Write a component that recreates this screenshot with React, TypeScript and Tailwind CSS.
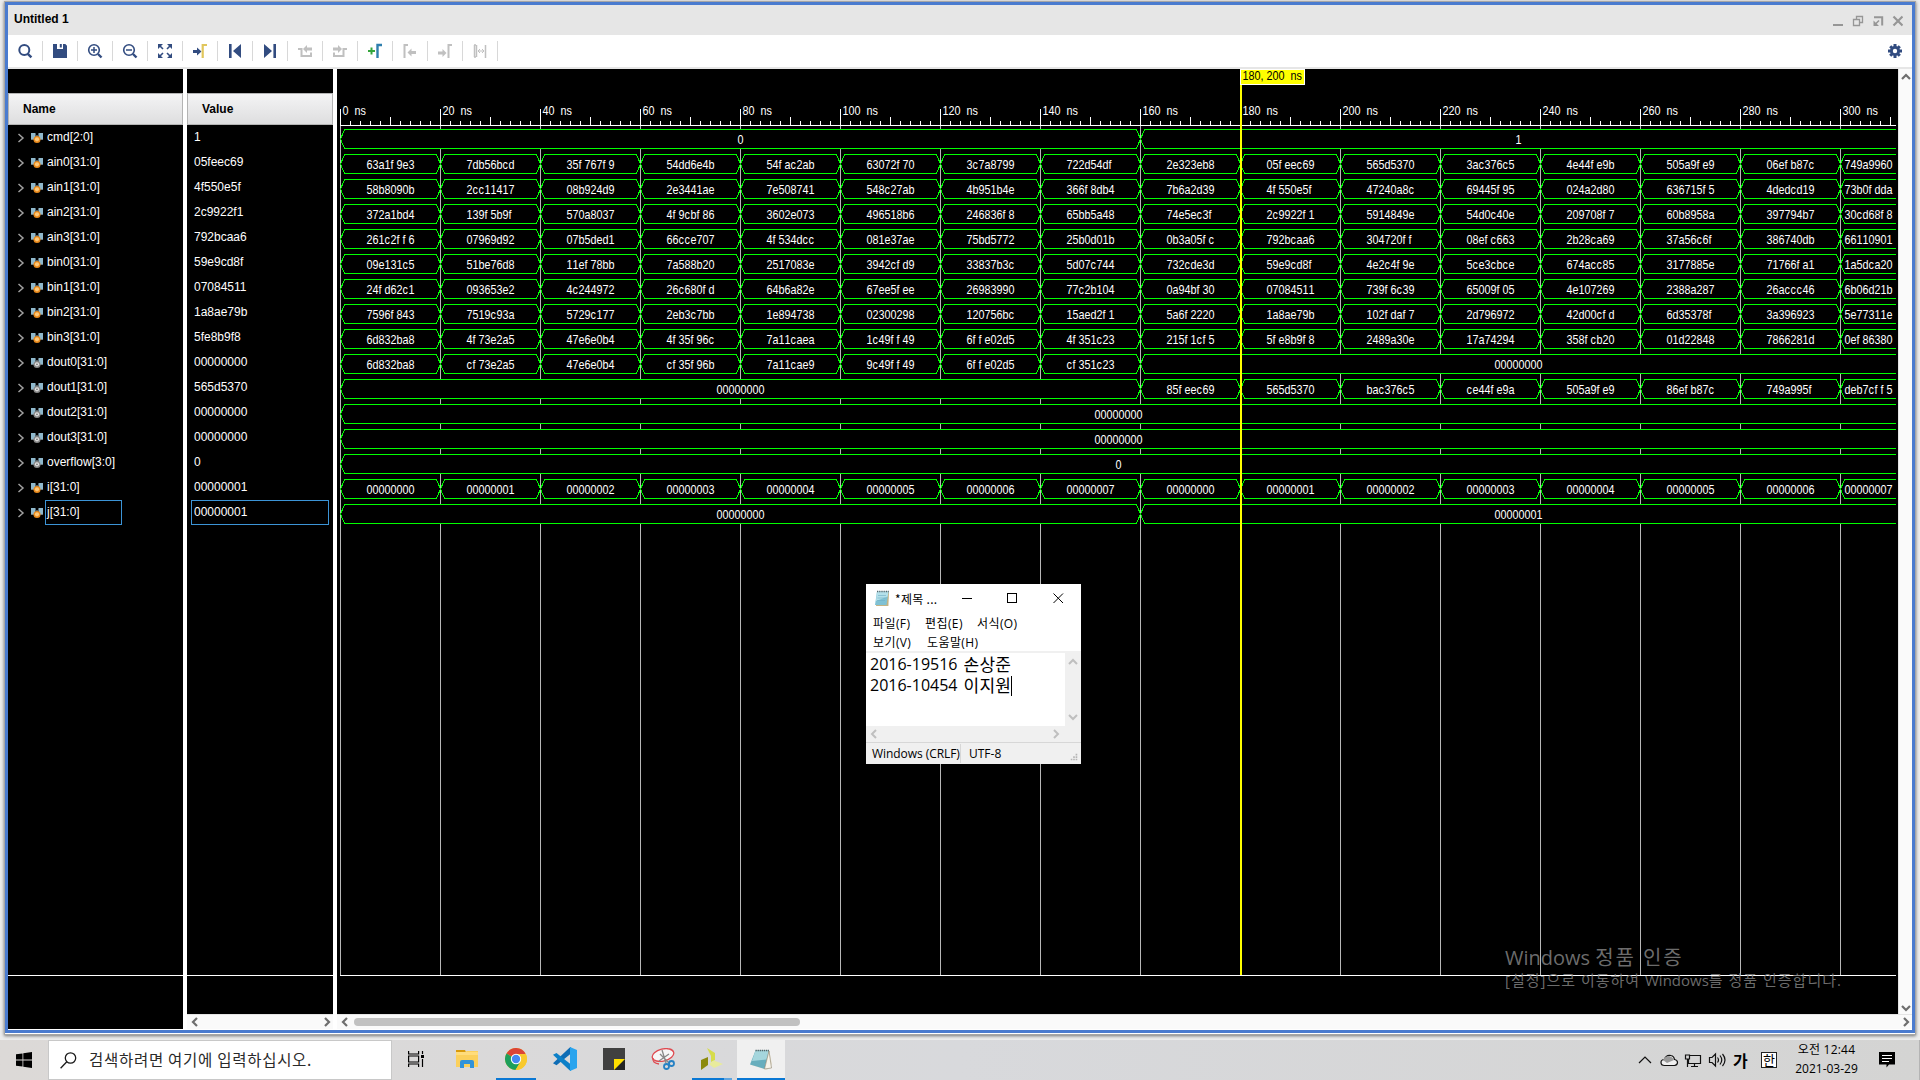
import React from "react";

const NAMES = [
  "cmd[2:0]", "ain0[31:0]", "ain1[31:0]", "ain2[31:0]", "ain3[31:0]", "bin0[31:0]", "bin1[31:0]", "bin2[31:0]",
  "bin3[31:0]", "dout0[31:0]", "dout1[31:0]", "dout2[31:0]", "dout3[31:0]", "overflow[3:0]", "i[31:0]", "j[31:0]",
];
const VALUES = [
  "1", "05feec69", "4f550e5f", "2c9922f1", "792bcaa6", "59e9cd8f", "07084511", "1a8ae79b",
  "5fe8b9f8", "00000000", "565d5370", "00000000", "00000000", "0", "00000001", "00000001",
];

type Segment = [start: number, end: number, label: string];

const END = 15.56;

const each = (s: string, from = 0): Segment[] =>
  s.split(" ").map((v, i) => [from + i, Math.min(from + i + 1, END), v]);

const WAVES: Segment[][] = [
  [[0, 8, "0"], [8, END, "1"]],
  each("63a1f9e3 7db56bcd 35f767f9 54dd6e4b 54fac2ab 63072f70 3c7a8799 722d54df 2e323eb8 05feec69 565d5370 3ac376c5 4e44fe9b 505a9fe9 06efb87c 749a9960"),
  each("58b8090b 2cc11417 08b924d9 2e3441ae 7e508741 548c27ab 4b951b4e 366f8db4 7b6a2d39 4f550e5f 47240a8c 69445f95 024a2d80 636715f5 4dedcd19 73b0fdda"),
  each("372a1bd4 139f5b9f 570a8037 4f9cbf86 3602e073 496518b6 246836f8 65bb5a48 74e5ec3f 2c9922f1 5914849e 54d0c40e 209708f7 60b8958a 397794b7 30cd68f8"),
  each("261c2ff6 07969d92 07b5ded1 66cce707 4f534dcc 081e37ae 75bd5772 25b0d01b 0b3a05fc 792bcaa6 304720ff 08efc663 2b28ca69 37a56c6f 386740db 66110901"),
  each("09e131c5 51be76d8 11ef78bb 7a588b20 2517083e 3942cfd9 33837b3c 5d07c744 732cde3d 59e9cd8f 4e2c4f9e 5ce3cbce 674acc85 3177885e 71766fa1 1a5dca20"),
  each("24fd62c1 093653e2 4c244972 26c680fd 64b6a82e 67ee5fee 26983990 77c2b104 0a94bf30 07084511 739f6c39 65009f05 4e107269 2388a287 26accc46 6b06d21b"),
  each("7596f843 7519c93a 5729c177 2eb3c7bb 1e894738 02300298 120756bc 15aed2f1 5a6f2220 1a8ae79b 102fdaf7 2d796972 42d00cfd 6d35378f 3a396923 5e77311e"),
  each("6d832ba8 4f73e2a5 47e6e0b4 4f35f96c 7a11caea 1c49ff49 6ffe02d5 4f351c23 215f1cf5 5fe8b9f8 2489a30e 17a74294 358fcb20 01d22848 7866281d 0ef86380"),
  [...each("6d832ba8 cf73e2a5 47e6e0b4 cf35f96b 7a11cae9 9c49ff49 6ffe02d5 cf351c23"), [8, END, "00000000"]],
  [[0, 8, "00000000"], ...each("85feec69 565d5370 bac376c5 ce44fe9a 505a9fe9 86efb87c 749a995f deb7cff5", 8)],
  [[0, END, "00000000"]],
  [[0, END, "00000000"]],
  [[0, END, "0"]],
  each("00000000 00000001 00000002 00000003 00000004 00000005 00000006 00000007 00000000 00000001 00000002 00000003 00000004 00000005 00000006 00000007"),
  [[0, 8, "00000000"], [8, END, "00000001"]],
];

const X0 = 340;
const STEP = 100;
const SQUEEZE = 0.9;

/* Fixed-pitch label: every character takes a 6px cell. */
function Cells({ x, y, text, fill = "#fff" }: { x: number; y: number; text: string; fill?: string }) {
  return (
    <text
      transform={`translate(${x} ${y}) scale(${SQUEEZE} 1)`}
      x={text.split("").map((_, i) => ((i * 6) / SQUEEZE).toFixed(2)).join(" ")}
      y="0"
      fill={fill}
      fontSize="12"
      fontFamily='"Liberation Sans", Arial, sans-serif'
      style={{ whiteSpace: "pre" }}
    >
      {text}
    </text>
  );
}

function Bus({ seg, top }: { seg: Segment; top: number }) {
  const [s, e, label] = seg;
  const a = X0 + s * STEP + 0.5;
  const open = e === END;
  const b = open ? 1896 : X0 + e * STEP + 0.5;
  const t = top + 0.5;
  const m = top + 10;
  const l = top + 19.5;
  const d = open
    ? `M${b} ${t}H${a + 4}L${a} ${m}L${a + 4} ${l}H${b}`
    : `M${a} ${m}L${a + 4} ${t}H${b - 4}L${b} ${m}L${b - 4} ${l}H${a + 4}Z`;
  const mid = Math.floor((a + b) / 2) + 0.4;
  return (
    <g>
      <path d={d} fill="#000" stroke="#00ff00" strokeWidth="1" shapeRendering="crispEdges" />
      <Cells x={e - s < 0.9 ? a + 4 : mid - label.length * 3} y={top + 15} text={label} />
    </g>
  );
}

function Waveform() {
  const ticks = Array.from({ length: 156 }, (_, i) => i);
  const majors = Array.from({ length: 16 }, (_, i) => i);
  return (
    <svg className="block shrink-0" width="1561" height="945" viewBox="337 69 1561 945">
      <rect x="337" y="69" width="1561" height="945" fill="#000" />
      {majors.map((i) => (
        <rect key={i} x={X0 + i * STEP} y="126" width="1" height="849" fill="#b8b8b8" />
      ))}
      <rect x="340" y="125" width="1556" height="1" fill="#fff" />
      <rect x="340" y="975" width="1556" height="1" fill="#fff" />
      {ticks.map((i) => {
        const top = i % 10 === 0 ? 109 : i % 5 === 0 ? 117 : 121;
        return <rect key={i} x={X0 + i * 10} y={top} width="1" height={125 - top} fill="#fff" />;
      })}
      {majors.map((i) => (
        <Cells key={i} x={X0 + i * STEP + 2.5} y={115} text={`${i * 20} ns`} />
      ))}
      {WAVES.map((row, r) => row.map((seg, i) => <Bus key={`${r}-${i}`} seg={seg} top={129 + r * 25} />))}
      <rect x="1240" y="69" width="2" height="906" fill="#ffff00" />
      <rect x="1240" y="69" width="65" height="16" fill="#fff" />
      <rect x="1241" y="70" width="63" height="14" fill="#ffff00" />
      <Cells x={1242.5} y={80} text="180,200 ns" fill="#000" />
    </svg>
  );
}

const NAVY = "#324c80";
const DIM = "#c0c0c0";

const TOOLS: React.ReactNode[] = [
  <g fill="none" stroke={NAVY} strokeWidth="2"><circle cx="7.3" cy="7" r="5" /><path d="M10.8 10.8l3.6 3.6" strokeWidth="2.4" /></g>,
  <path d="M1 1h4v5h6V1h2.300l1.700 1.700V15H1zM7.800 1h2v3.500h-2z" fill={NAVY} />,
  <g fill="none" stroke={NAVY}><circle cx="7" cy="7" r="5.300" strokeWidth="1.600" /><path d="M11 11l3.500 3.500" strokeWidth="2.400" /><path d="M4 7h6M7 4v6" strokeWidth="1.500" /></g>,
  <g fill="none" stroke={NAVY}><circle cx="7" cy="7" r="5.300" strokeWidth="1.600" /><path d="M11 11l3.500 3.500" strokeWidth="2.400" /><path d="M4 7h6" strokeWidth="1.500" /></g>,
  <g fill={NAVY} stroke={NAVY} strokeWidth="1.600"><path d="M2 2l4 4M14 2l-4 4M2 14l4-4M14 14l-4-4" /><path stroke="none" d="M1 1h5L1 6zM15 1v5l-5-5zM1 15v-5l5 5zM15 15h-5l5-5z" /></g>,
  <g><path d="M1 7h4V4.500L9.500 8.500 5 12.500V10H1z" fill={NAVY} /><path d="M10.700 15V2H15" fill="none" stroke="#e0c65c" strokeWidth="2.200" /></g>,
  <path d="M2 1h2.600v14H2zM14 1v14L6 8z" fill={NAVY} />,
  <path d="M11.400 1H14v14h-2.600zM2 1v14l8-7z" fill={NAVY} />,
  <g><path d="M1 6h3.500v7H14V9.500" fill="none" stroke={DIM} strokeWidth="2" /><path d="M6 6l4-4v2.500h5v3h-5V10z" fill={DIM} /></g>,
  <g><path d="M15 6h-3.500v7H2V9.500" fill="none" stroke={DIM} strokeWidth="2" /><path d="M10 6L6 2v2.500H1v3h5V10z" fill={DIM} /></g>,
  <g fill="none"><path d="M1 8h7M4.500 4.500v7" stroke="#35a63c" strokeWidth="2" /><path d="M10.500 15V2H15" stroke="#2f7fae" strokeWidth="2.400" /></g>,
  <g><path d="M2.500 15V2H6" fill="none" stroke={DIM} strokeWidth="2" /><path d="M5.500 9.500l4-4V8h4.500v3H9.500v2.500z" fill={DIM} /></g>,
  <g><path d="M11.500 15V2H15" fill="none" stroke={DIM} strokeWidth="2" /><path d="M9.500 10l-4-4v2.500H1v3h4.500V14z" fill={DIM} /></g>,
  <g fill="none" stroke={DIM}><path d="M2 2h2M2 14h2M2.500 2v12M4.500 2v12M13.500 2v13" strokeWidth="1.500" /><path d="M6 8h6M8 6L6 8l2 2M10 6l2 2-2 2" strokeWidth="1" /></g>,
];

function Toolbar() {
  return (
    <div className="flex h-8 shrink-0 items-center justify-between bg-white">
      <div className="flex">
        {TOOLS.map((icon, i) => (
          <div key={i} className="flex h-5 w-[35px] items-center justify-center border-r border-[#d8d8d8]">
            <svg width="16" height="16" viewBox="0 0 16 16" fillRule="evenodd">{icon}</svg>
          </div>
        ))}
      </div>
      <svg className="mr-2.5" width="14" height="14" viewBox="0 0 14 14">
        <g stroke={NAVY} strokeWidth="3"><path d="M7 0v14M0 7h14M2.200 2.200l9.600 9.600M11.800 2.200l-9.600 9.600" /></g>
        <circle cx="7" cy="7" r="5" fill={NAVY} />
        <circle cx="7" cy="7" r="2.200" fill="#fff" />
      </svg>
    </div>
  );
}

function TitleBar() {
  return (
    <div className="flex h-[30px] shrink-0 items-center justify-between bg-[#e6e6e6] pr-[9px] pl-1.5 text-[12px] font-bold text-black">
      <span className="-mt-[3px]">Untitled 1</span>
      <svg width="70" height="14" viewBox="1833 13 70 14" fill="none" stroke="#969696" strokeWidth="1.500">
        <path d="M1833 25h10" strokeWidth="2" />
        <path d="M1853.500 19.500h6v6h-6zM1856.500 19v-2.500h6v6H1860" strokeWidth="1.300" />
        <path d="M1874 17.200h8.200v8.300" strokeWidth="2" />
        <path d="M1873.500 20.500v5.500h5.500z" fill="#969696" stroke="none" />
        <path d="M1875 24.500l4-4" strokeWidth="1.600" />
        <path d="M1893.500 16.500l9 9M1902.500 16.500l-9 9" strokeWidth="2.200" />
      </svg>
    </div>
  );
}

function BusIcon({ output }: { output: boolean }) {
  return (
    <svg className="mr-1 ml-1.5 shrink-0" width="12" height="12" viewBox="0 0 12 12">
      <path d="M0 1h4.500v6H0zM7.500 1H12v6H7.500z" fill="#8fb8cc" />
      <path d="M4.500 2.500l1.500 2 1.500-2M0 7.500h3M9 7.500h3" fill="none" stroke="#6d7f88" />
      <circle cx="6" cy="7.500" r="3.500" fill={output ? "#8a8a8a" : "#e8891c"} />
      <circle cx="6" cy="7.300" r="2.100" fill={output ? "#e4e4e4" : "#ffc878"} />
      {output && <circle cx="6" cy="7.300" r="0.900" fill="#777" />}
    </svg>
  );
}

function Header({ title, pad }: { title: string; pad: string }) {
  return (
    <div className={`mt-6 flex h-8 shrink-0 items-center border border-[#b4b4b4] bg-linear-to-b from-[#f4f4f5] to-[#dededf] text-[12px] font-bold text-black ${pad}`}>
      {title}
    </div>
  );
}

const arrows = { left: "M6 1L2 5l4 4", right: "M2 1l4 4-4 4", up: "M1 6l4-4 4 4", down: "M1 2l4 4 4-4" };

function Arrow({ dir, color = "#6e6e6e", width = 2.2 }: { dir: keyof typeof arrows; color?: string; width?: number }) {
  const horizontal = dir === "left" || dir === "right";
  return (
    <svg className="shrink-0" width={horizontal ? 8 : 10} height={horizontal ? 10 : 8} viewBox={horizontal ? "0 0 8 10" : "0 0 10 8"}>
      <path d={arrows[dir]} fill="none" stroke={color} strokeWidth={width} />
    </svg>
  );
}

function SimulatorWindow() {
  return (
    <div className="flex h-[1040px] flex-col bg-[#ececec] pt-px pr-1 pb-1 pl-1">
      <div className="flex h-[1034px] shrink-0 flex-col border border-[#a6a6a6] bg-white shadow-[0_1px_3px_rgba(0,0,0,0.5)]">
        <div className="flex h-[1031px] shrink-0 flex-col border-[3px] border-[#4a7bcf] font-['Liberation_Sans',Arial,sans-serif]">
          <TitleBar />
          <Toolbar />
          <div className="h-0.5 shrink-0 bg-[#e6e6e6]" />
          <div className="flex h-[960px] shrink-0 bg-white">
            <div className="flex w-[175px] shrink-0 flex-col bg-black text-[12px] text-white">
              <Header title="Name" pad="pl-3.5" />
              {NAMES.map((n, i) => (
                <div key={n} className="flex h-[25px] shrink-0 items-center pl-[9px]">
                  <svg className="shrink-0" width="8" height="10" viewBox="0 0 8 10">
                    <path d="M1.500 1l4.500 4-4.500 4" fill="none" stroke="#a0a0a0" strokeWidth="1.500" />
                  </svg>
                  <BusIcon output={i >= 9 && i <= 13} />
                  <span className={i === 15 ? "-ml-[2px] h-[25px] w-[77px] border border-[#3c94d6] pl-px leading-[22px]" : "h-[25px] leading-6"}>{n}</span>
                </div>
              ))}
              <div className="mt-[450px] h-px bg-white" />
            </div>
            <div className="ml-1 flex w-[146px] shrink-0 flex-col bg-black text-[12px] text-white">
              <Header title="Value" pad="pl-3.5" />
              {VALUES.map((v, i) => (
                <div key={i} className="flex h-[25px] shrink-0 px-1">
                  <span className={i === 15 ? "w-[138px] border border-[#3c94d6] pl-0.5 leading-[22px]" : "pl-[3px] leading-6"}>{v}</span>
                </div>
              ))}
              <div className="mt-[450px] h-px shrink-0 bg-white" />
              <div className="h-[38px] shrink-0" />
              <div className="flex h-[15px] shrink-0 items-center justify-between border-t border-[#e4e4e4] bg-[#fafafa] pr-0.5 pl-1">
                <Arrow dir="left" />
                <Arrow dir="right" />
              </div>
            </div>
            <div className="ml-1 flex w-[1575px] shrink-0 flex-col">
              <div className="flex h-[945px] shrink-0">
                <Waveform />
                <div className="flex w-3.5 flex-col items-center justify-between border-l border-[#e4e4e4] bg-[#fafafa] pt-1 pb-0.5">
                  <Arrow dir="up" />
                  <Arrow dir="down" />
                </div>
              </div>
              <div className="flex h-[15px] items-center border-t border-[#e4e4e4] bg-[#fafafa] pr-0.5 pl-1">
                <Arrow dir="left" />
                <div className="ml-[5px] h-2 w-[446px] rounded bg-[#c1c1c1]" />
                <div className="flex-1" />
                <Arrow dir="right" />
              </div>
            </div>
          </div>
        </div>
      </div>
    </div>
  );
}

function NotepadIcon() {
  return (
    <svg width="16" height="17" viewBox="0 0 16 17">
      <path d="M3.500 2H15l-.6 14H2z" fill="#c3b283" />
      <path d="M3 1.500h11.500L12.500 15H1z" fill="#7fc1d4" />
      <path d="M3 1.500h11.500l-.8 5L2 11z" fill="#b4e0ea" />
      <path d="M3 1.500h12" stroke="#56666b" strokeWidth="1.600" strokeDasharray="1 .8" />
      <path d="M4 5.500h8M3.500 8h8M3 10.500h8" stroke="#6eafc4" strokeWidth=".6" />
    </svg>
  );
}

function NotepadWindow() {
  return (
    <div className="absolute top-[584px] left-[866px] flex h-[180px] w-[215px] flex-col bg-white font-['Open_Sans','Noto_Sans_CJK_KR',sans-serif] text-[12px] text-black">
      <div className="flex h-[29px] shrink-0 items-center pl-[8px]">
        <NotepadIcon />
        <span className="ml-[5px] w-[67px] font-['Noto_Sans_CJK_KR',sans-serif] leading-4 tracking-[0.3px] whitespace-nowrap">*제목 ...</span>
        <svg width="102" height="12" viewBox="0 0 102 12" fill="none" stroke="#000" shapeRendering="crispEdges">
          <path d="M0 5.500h10M45.500 .5h9v9h-9z" />
          <path d="M91.500 .5l9.500 9.500M101 .5L91.500 10" shapeRendering="auto" />
        </svg>
      </div>
      <div className="flex h-[19px] shrink-0 items-center pt-0.5 pl-[7px] leading-4 tracking-[0.4px]">
        <span className="w-[52px]">파일(F)</span>
        <span className="w-[52px]">편집(E)</span>
        <span>서식(O)</span>
      </div>
      <div className="flex h-[19px] shrink-0 items-center pt-0.5 pl-[7px] leading-4 tracking-[0.4px]">
        <span className="w-[54px]">보기(V)</span>
        <span>도움말(H)</span>
      </div>
      <div className="flex h-[75px] shrink-0 border-t-2 border-[#f0f0f0]">
        <div className="w-[199px] pt-px pl-1 text-[16px] leading-[21px] whitespace-nowrap">
          <div className="flex h-[21px] items-center">2016-19516<span className="ml-1.5 text-[17px] tracking-[0.3px]">손상준</span></div>
          <div className="flex h-[21px] items-center">2016-10454<span className="ml-1.5 text-[17px] tracking-[0.3px]">이지원</span><span className="h-5 w-px bg-black" /></div>
        </div>
        <div className="flex w-4 flex-col items-center justify-between bg-[#f0f0f0] py-[5px]">
          <Arrow dir="up" color="#bfbfbf" width={2} />
          <Arrow dir="down" color="#bfbfbf" width={2} />
        </div>
      </div>
      <div className="flex h-4 shrink-0 items-center justify-between bg-[#f0f0f0] pr-[21px] pl-1">
        <Arrow dir="left" color="#bfbfbf" width={2} />
        <Arrow dir="right" color="#bfbfbf" width={2} />
      </div>
      <div className="flex h-[22px] items-center border-t border-[#d7d7d7] bg-[#f0f0f0] pl-1.5 whitespace-nowrap">
        <span className="w-[88px] tracking-[-0.06px]">Windows (CRLF)</span>
        <span className="h-[19px] w-px bg-[#d7d7d7]" />
        <span className="flex-1 pl-2">UTF-8</span>
        <svg className="mr-0.5 self-end pb-0.5" width="10" height="11" viewBox="0 0 10 11" fill="#b5b5b5">
          <path d="M7 1h2v2H7zM4 4h2v2H4zM7 4h2v2H7zM1 7h2v2H1zM4 7h2v2H4zM7 7h2v2H7z" />
        </svg>
      </div>
    </div>
  );
}

function TaskIcon({ children, under }: { children: React.ReactNode; under?: React.ReactNode }) {
  return (
    <div className="flex h-10 w-[49px] flex-col items-center">
      <div className="flex h-[38px] shrink-0 items-center">{children}</div>
      {under}
    </div>
  );
}

function Taskbar() {
  return (
    <div className="flex h-10 bg-linear-to-r from-[#dcd9d7] via-[#d8d9dc] to-[#d4d4d3] font-['Open_Sans','Noto_Sans_CJK_KR',sans-serif] text-black">
      <div className="flex w-12 items-center justify-center">
        <svg width="16" height="16" viewBox="0 0 16 16"><path d="M0 2.300L6.500 1.400V7.600H0zM7.300 1.300L16 0v7.600H7.300zM0 8.400h6.500v6.200L0 13.700zM7.300 8.400H16V16l-8.700-1.300z" /></svg>
      </div>
      <div className="flex w-[344px] items-center border border-[#c8c8c8] bg-white pl-[11px]">
        <svg width="17" height="17" viewBox="0 0 17 17" fill="none" stroke="#1a1a1a" strokeWidth="1.300"><circle cx="10.500" cy="6" r="5.200" /><path d="M6.800 9.800L.6 16.200" /></svg>
        <span className="ml-3 font-['Noto_Sans_CJK_KR',sans-serif] text-[15.500px] tracking-[0.72px] text-[#2a2a2a]">검색하려면 여기에 입력하십시오.</span>
      </div>
      <div className="flex w-12 items-center justify-center pb-0.5">
        <svg width="16" height="16" viewBox="0 0 16 16" fill="none" stroke="#000" strokeWidth="1.200"><path d="M.6 0v3h10V0M.6 16v-3h10v3M.6 5h10v6H.6zM14.500 0v3M14.500 8v8" /><path d="M13 4h3v3h-3z" fill="#000" stroke="none" /></svg>
      </div>
      <div className="ml-0.5 flex">
        <TaskIcon>
          <svg width="22" height="20" viewBox="0 0 22 20"><path d="M0 1h9l1 2H0z" fill="#d99a0b" /><path d="M0 3h9l2-1h11v16H0z" fill="#fbd05c" /><path d="M0 3h22v3H0z" fill="#ffdc7c" /><path d="M4 19v-6q0-2 2-2h10q2 0 2 2v6h-4v-4H8v4z" fill="#3193d9" /></svg>
        </TaskIcon>
        <TaskIcon under={<div className="h-0.5 w-10 bg-[#0a78d4]" />}>
          <svg width="22" height="22" viewBox="0 0 22 22">
            <circle cx="11" cy="11" r="11" fill="#f9c92d" />
            <path d="M11 11L1.470 5.500A11 11 0 0 1 20.530 5.500z" fill="#dc4437" />
            <path d="M1.470 5.500A11 11 0 0 0 10.500 22l5.100-8.500L11 11z" fill="#1d9f5c" />
            <path d="M11 6h9.800A11 11 0 0 1 10.500 22l5-8z" fill="#f9c92d" />
            <circle cx="11" cy="11" r="5.200" fill="#fff" /><circle cx="11" cy="11" r="4.200" fill="#4688f4" />
          </svg>
        </TaskIcon>
        <TaskIcon>
          <svg width="24" height="24" viewBox="0 0 24 24"><path d="M18 0v6.500L3.500 18.200 0 16.300 16.500.8z" fill="#0f6db5" /><path d="M18 24v-6.500L3.500 6 0 7.800 16.500 23.200z" fill="#0c80c8" /><path d="M17 0l7 3v18l-7 3z" fill="#29a4ee" /></svg>
        </TaskIcon>
        <TaskIcon>
          <svg width="22" height="22" viewBox="0 0 22 22"><path d="M0 0h22v22H0z" fill="#404040" /><path d="M22 11v11H11z" fill="#242424" /><path d="M11 11h11L11 22z" fill="#ffdf00" /></svg>
        </TaskIcon>
        <TaskIcon>
          <svg width="24" height="22" viewBox="0 0 24 22" fill="none">
            <ellipse cx="12" cy="7" rx="11" ry="6" fill="#f6f6f6" stroke="#df4a50" strokeWidth="1.300" transform="rotate(-14 12 7)" />
            <path d="M2 10q-1 5 6 6" stroke="#df4a50" strokeWidth="1.300" />
            <path d="M11 2l4 13M18 6L8 13M9 6l9 9" stroke="#888" strokeWidth="1.300" />
            <circle cx="15.500" cy="18.500" r="2.500" stroke="#2581c4" strokeWidth="1.800" /><circle cx="20.500" cy="15.500" r="2.500" stroke="#2581c4" strokeWidth="1.800" />
          </svg>
        </TaskIcon>
        <TaskIcon under={<div className="flex h-0.5 w-10"><div className="w-8 bg-[#0a78d4]" /><div className="w-2 bg-[#5fa5e0]" /></div>}>
          <svg width="23" height="22" viewBox="0 0 23 22"><path d="M7 0l8 5v7l-4 2V8z" fill="#d6dc4b" /><path d="M1 12l7-3v8l-7 5z" fill="#8c8a0c" /><path d="M10 15l4-2.500 9 3.500-9 4-4-3z" fill="#e8eb9c" /></svg>
        </TaskIcon>
        <div className="ml-px flex w-12 flex-col items-center border-b-2 border-[#0a78d4] bg-[#f0f0f0] pt-[9px]">
          <svg width="24" height="22" viewBox="0 0 24 22"><path d="M7 1h13l3 14-5 6-16-5z" fill="#e9e3d2" /><path d="M6.500 1.500H20L15.500 20 1 15.500z" fill="#68aebd" /><path d="M6.500 1.500H20l-2.500 9L3 12z" fill="#a5d6dd" /><path d="M20 2l2.500 17-7 1z" fill="#f7f4ea" stroke="#897f69" strokeWidth=".6" /><path d="M6.500 1.500H20" stroke="#52666a" strokeWidth="1.500" strokeDasharray="1.300 .8" /></svg>
        </div>
      </div>
      <div className="flex-1" />
      <div className="flex items-center">
        <svg width="92" height="20" viewBox="1636 1050 92 20" fill="none" stroke="#111" strokeWidth="1.200">
          <path d="M1639 1063l6-6 6 6" />
          <path d="M1664.500 1065.500q-3.500 0-3.500-3t3.500-3q1.500-5 6.500-4 3 .5 3.500 4 3 .5 3 3t-3 3z" fill="#f0f0f0" />
          <path d="M1663 1060q2-4 6-4 4 1 5 4l-7 3z" fill="#999" stroke="none" />
          <path d="M1689.500 1055.500h11v8h-12v-4M1694.500 1063.500v3.500M1691 1066.500h7M1685.500 1055h4v4h-4zM1687.500 1059v8" />
          <path d="M1709.500 1057.500h2.500l3.500-3.500v12l-3.500-3.500h-2.500zM1717.500 1057.500q2 2.500 0 5M1720 1055.500q3.500 4.500 0 9M1722.500 1054q5 6 0 12" />
        </svg>
        <span className="ml-[5px] w-7 font-['Noto_Sans_CJK_KR',sans-serif] text-[16px] leading-6 font-bold">가</span>
        <span className="mr-[3px] flex h-4 w-4 items-center justify-center border border-[#222] bg-white font-['Noto_Sans_CJK_KR',sans-serif] text-[13px] leading-[14px]">한</span>
      </div>
      <div className="flex w-[94px] flex-col items-center pt-px pr-px text-[12px] leading-[18.500px]">
        <div className="tracking-[0.2px]">오전 12:44</div>
        <div>2021-03-29</div>
      </div>
      <div className="flex w-[46px] items-center border-r border-[#b4b4b4] pl-[5px]">
        <svg width="16" height="16" viewBox="0 0 16 16"><path d="M0 0h16v12.500h-6L7.500 15.500V12.500H0z" fill="#000" /><path d="M3 3.500h10M3 6.500h10M3 9.500h7" stroke="#fff" /></svg>
      </div>
    </div>
  );
}

export default function App() {
  return (
    <div className="relative h-[1080px] w-[1920px] overflow-hidden bg-white">
      <SimulatorWindow />
      <Taskbar />
      <NotepadWindow />
      <div className="absolute top-[942px] left-[1505px] font-['Open_Sans','Noto_Sans_CJK_KR',sans-serif] whitespace-nowrap text-[#808080]/85">
        <div className="text-[20px] leading-8">Windows <span className="tracking-[1.9px]">정품 인증</span></div>
        <div className="-mt-0.5 text-[15px] leading-4 tracking-[1px]">[설정]으로 이동하여 <span className="tracking-normal">Windows</span>를 정품 인증합니다.</div>
      </div>
    </div>
  );
}
